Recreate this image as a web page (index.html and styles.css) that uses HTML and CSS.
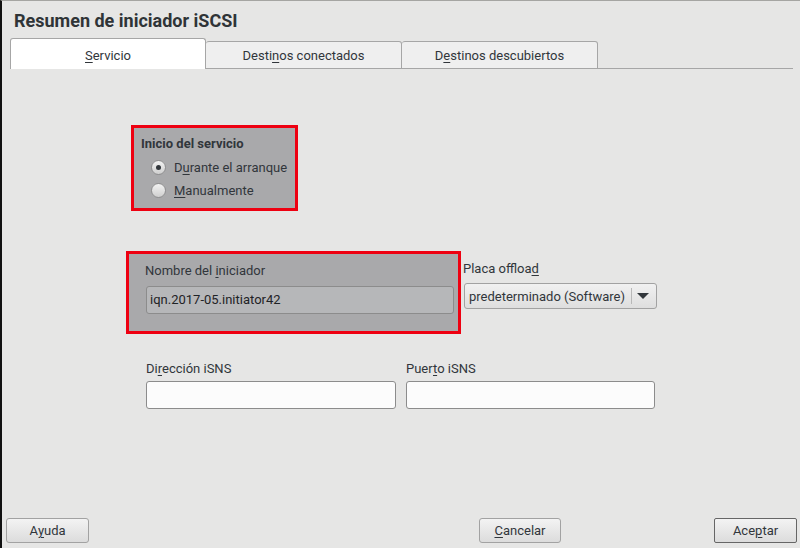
FILE: index.html
```html
<!DOCTYPE html>
<html lang="es">
<head>
<meta charset="utf-8">
<link rel="stylesheet" href="styles.css">
</head>
<body>
<div class="window">
  <h1 class="title">Resumen de iniciador iSCSI</h1>
  <div class="tabs">
    <div class="tab active"><span><u>S</u>ervicio</span></div>
    <div class="tab"><span>Desti<u>n</u>os conectados</span></div>
    <div class="tab"><span>D<u>e</u>stinos descubiertos</span></div>
    <div class="tab-fill"></div>
  </div>
  <div class="pane">
    <div class="row row-service">
      <div class="hl hl-service">
        <div class="group-title">Inicio del servicio</div>
        <label class="radio-row"><span class="radio checked"></span><span>D<u>u</u>rante el arranque</span></label>
        <label class="radio-row"><span class="radio"></span><span><u>M</u>anualmente</span></label>
      </div>
    </div>
    <div class="row row-name">
      <div class="hl hl-name">
        <div class="label">Nombre del <u>i</u>niciador</div>
        <div class="input input-dark">iqn.2017-05.initiator42</div>
      </div>
      <div class="field-offload">
        <div class="label">Placa offloa<u>d</u></div>
        <div class="combo"><span class="combo-text">predeterminado (Software)</span><span class="combo-sep"></span><span class="combo-arrow"></span></div>
      </div>
    </div>
    <div class="row row-isns">
      <div class="field field-addr">
        <div class="label">Di<u>r</u>ección iSNS</div>
        <div class="input"></div>
      </div>
      <div class="field field-port">
        <div class="label">Puer<u>t</u>o iSNS</div>
        <div class="input"></div>
      </div>
    </div>
  </div>
  <div class="buttons">
    <div class="btn btn-help">A<u>y</u>uda</div>
    <div class="spacer"></div>
    <div class="btn btn-cancel"><u>C</u>ancelar</div>
    <div class="btn btn-ok">Ace<u>p</u>tar</div>
  </div>
</div>
</body>
</html>
```
FILE: styles.css
```css
* { box-sizing: border-box; }
html, body { margin: 0; padding: 0; }
body {
  font-family: Roboto, "Noto Sans", sans-serif;
  font-size: 13px;
  color: #31363b;
}
u { text-decoration-thickness: 1px; text-underline-offset: 2px; }
.window {
  width: 800px;
  height: 548px;
  background: #e6e6e5;
  border-left: 2px solid #111;
  border-top: 1px solid #a5a5a2;
  display: flex;
  flex-direction: column;
  overflow: hidden;
}
.title {
  margin: 0;
  padding: 8px 0 0 12px;
  height: 37px;
  font-size: 18px;
  line-height: 24px;
  font-weight: bold;
  color: #2f3437;
}
.tabs {
  display: flex;
  align-items: flex-end;
  padding-left: 8px;
  height: 31px;
}
.tab {
  height: 28px;
  width: 196px;
  background: #efefef;
  border: 1px solid #a6a6a6;
  border-left: none;
  border-radius: 3px 3px 0 0;
  display: flex;
  align-items: center;
  justify-content: center;
  color: #31363b;
}
.tab span { margin-top: 1px; }
.tab.active {
  height: 31px;
  width: 196px;
  background: #fff;
  border: 1px solid #a6a6a6;
  border-bottom: none;
  z-index: 1;
}
.tab.active span { margin-top: 2px; }
.tab-fill {
  width: 195px;
  border-bottom: 1px solid #a6a6a6;
}
.pane {
  flex: 1;
  display: flex;
  flex-direction: column;
}
.row { display: flex; }
.hl {
  border: 3px solid #ee0011;
  background: #a9a9ab;
}
.row-service { padding: 56px 0 0 129px; }
.hl-service {
  width: 167px;
  height: 86px;
  padding: 7px 0 0 7px;
}
.group-title {
  font-weight: bold;
  line-height: 17px;
  margin-bottom: 4px;
}
.radio-row {
  display: flex;
  align-items: center;
  height: 23px;
  padding-left: 10px;
  gap: 8px;
}
.radio {
  width: 15px;
  height: 15px;
  border-radius: 50%;
  border: 1px solid #8f8f90;
  background: linear-gradient(#f2f2f2, #cfcfcf);
  display: flex;
  align-items: center;
  justify-content: center;
}
.radio.checked::after {
  content: "";
  width: 5px;
  height: 5px;
  border-radius: 50%;
  background: #31363b;
}
.row-name { padding: 40px 0 0 124px; }
.hl-name {
  width: 335px;
  height: 83px;
  padding: 8px 0 0 16px;
}
.label { line-height: 17px; margin-bottom: 4px; }
.hl-name .label { margin-bottom: 7px; }
.input {
  height: 28px;
  border: 1px solid #8c8c8c;
  border-radius: 3px;
  background: #fcfcfc;
  padding: 0 4px;
  line-height: 26px;
}
.input-dark {
  width: 308px;
  background: #b6b7b9;
  margin-left: 1px;
  padding-left: 3px;
  color: #1f2326;
}
.field-offload { padding: 9px 0 0 2px; }
.field-offload .label { margin-bottom: 6px; }
.combo {
  width: 193px;
  height: 26px;
  margin-left: 1px;
  border: 1px solid #a2a2a2;
  border-radius: 3px;
  background: linear-gradient(#f1f1f1, #dedede);
  display: flex;
  align-items: center;
  padding-left: 4px;
}
.combo-text { flex: 1; }
.combo-sep {
  width: 1px;
  height: 16px;
  background: #b8b8b8;
  margin-right: 5px;
}
.combo-arrow {
  width: 0;
  height: 0;
  border-left: 6px solid transparent;
  border-right: 6px solid transparent;
  border-top: 6px solid #31363b;
  margin-right: 7px;
}
.row-isns { padding: 26px 0 0 144px; gap: 10px; }
.field-addr .input { width: 250px; }
.field-port .input { width: 249px; }
.buttons {
  display: flex;
  padding: 0 3px 5px 4px;
  align-items: center;
}
.spacer { flex: 1; }
.btn {
  height: 25px;
  width: 83px;
  border: 1px solid #a2a2a2;
  border-radius: 3px;
  background: linear-gradient(#f3f3f3, #dcdcdc);
  display: flex;
  align-items: center;
  justify-content: center;
}
.btn-cancel { width: 82px; margin-right: 153px; }
.btn-ok {
  width: 83px;
  border: 1px solid #666;
  border-radius: 2px;
}
```
